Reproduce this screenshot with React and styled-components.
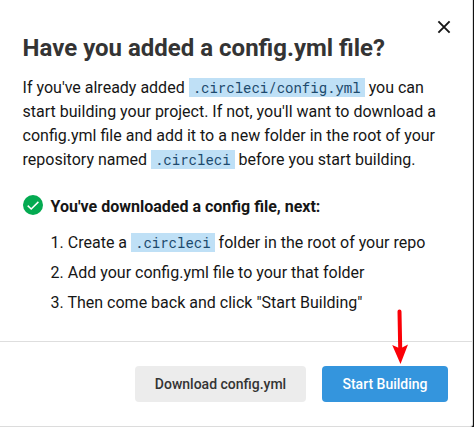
import React from 'react';
import styled, { createGlobalStyle } from 'styled-components';

const GlobalStyle = createGlobalStyle`
  * { box-sizing: border-box; }
  body { margin: 0; background: #111; overflow: hidden; }
`;

const Dialog = styled.div`
  position: relative;
  display: flex;
  flex-direction: column;
  width: 473px;
  height: 427px;
  background: #fff;
  border-right: 1px solid #ddd;
  border-bottom: 1px solid #dcdcdc;
  border-bottom-right-radius: 3px;
  font-family: Roboto, sans-serif;
  font-size: 16px;
  line-height: 24px;
  color: #161616;
`;

const Content = styled.div`
  height: 342px;
  padding: 32px 23px 0 22.6px;
  border-bottom: 1px solid #dedede;
`;

const Title = styled.h1`
  margin: 0;
  font-size: 24px;
  line-height: 32px;
  font-weight: 700;
  color: #343434;
  white-space: nowrap;
`;

const Description = styled.p`
  margin: 12px 0 0;
  white-space: nowrap;
`;

const Code = styled.code`
  padding: 0 4px;
  background: #bfe0f6;
  color: #1d4a6d;
  font-family: 'Roboto Mono', 'Liberation Mono', monospace;
  font-size: 14px;
`;

const Status = styled.div`
  display: flex;
  align-items: center;
  gap: 8px;
  margin-top: 23px;
  font-weight: 700;
`;

const CheckIcon = styled.svg`
  display: block;
  overflow: visible;
  width: 20px;
  height: 20px;
  margin-bottom: 3px;
`;

const Steps = styled.ol`
  list-style: none;
  margin: 12px 0 0;
  padding: 0 0 0 28px;
  display: flex;
  flex-direction: column;
  gap: 6px;
`;

const Step = styled.li`
  height: 24px;
  white-space: nowrap;
`;

const Footer = styled.div`
  display: flex;
  flex: 1;
  justify-content: flex-end;
  align-items: flex-start;
  gap: 16px;
  padding: 24px 24px 0;
`;

const Button = styled.button`
  width: ${(p) => (p.$primary ? 126 : 171)}px;
  height: 36px;
  padding: 0;
  border: 0;
  border-radius: 4px;
  background: ${(p) => (p.$primary ? '#3495dd' : '#ececec')};
  color: ${(p) => (p.$primary ? '#fff' : '#343434')};
  font: 500 14px/36px Roboto, sans-serif;
  white-space: nowrap;
`;

const CloseButton = styled.button`
  position: absolute;
  top: 20px;
  right: 21px;
  width: 14px;
  height: 14px;
  padding: 0;
  border: 0;
  background: none;
`;

const Drawing = styled.svg`
  display: block;
`;

const Pointer = styled.svg`
  position: absolute;
  left: 390px;
  top: 296px;
`;

export default function App() {
  return (
    <>
      <GlobalStyle />
      <Dialog role="dialog">
        <Content>
          <Title>Have you added a config.yml file?</Title>
          <Description>
            If you've already added <Code>.circleci/config.yml</Code> you can<br />
            start building your project. If not, you'll want to download a<br />
            config.yml file and add it to a new folder in the root of your<br />
            repository named <Code>.circleci</Code> before you start building.
          </Description>
          <Status>
            <CheckIcon viewBox="0 0 20 20">
              <circle cx="10" cy="9" r="10" fill="#04aa51" />
              <path d="M4.7 9.6 8.2 13 15.4 5.9" fill="none" stroke="#fff" strokeWidth="1.5" />
            </CheckIcon>
            <span>You've downloaded a config file, next:</span>
          </Status>
          <Steps>
            <Step>1. Create a <Code>.circleci</Code> folder in the root of your repo</Step>
            <Step>2. Add your config.yml file to your that folder</Step>
            <Step>3. Then come back and click "Start Building"</Step>
          </Steps>
        </Content>
        <Footer>
          <Button>Download config.yml</Button>
          <Button $primary>Start Building</Button>
        </Footer>
        <CloseButton aria-label="Close">
          <Drawing width="14" height="14" viewBox="0 0 14 14">
            <path d="M1.4 1.4 12.6 12.6M12.6 1.4 1.4 12.6" stroke="#161616" strokeWidth="1.9" />
          </Drawing>
        </CloseButton>
        <Pointer width="20" height="70" viewBox="0 0 20 70">
          <path d="M9.5 15.5 10.2 52" stroke="#fb0007" strokeWidth="4" strokeLinecap="round" />
          <path d="M2.2 49 10.2 52.5 18 48.5 10.5 68Z" fill="#fb0007" />
        </Pointer>
      </Dialog>
    </>
  );
}
